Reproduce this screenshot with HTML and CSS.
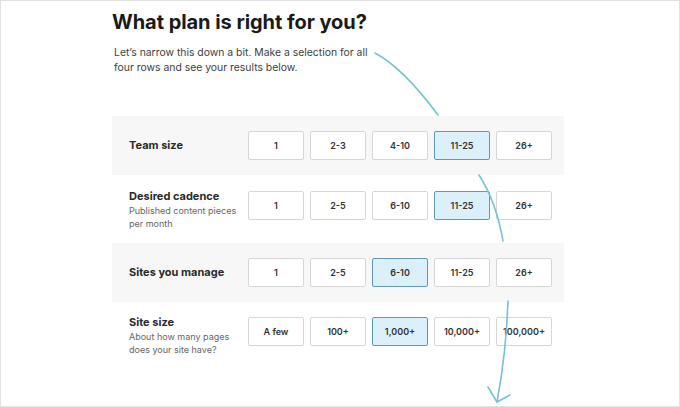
FILE: index.html
```html
<!DOCTYPE html>
<html lang="en">
<head>
<meta charset="utf-8">
<title>What plan is right for you?</title>
<link rel="stylesheet" href="styles.css">
</head>
<body>
<div class="frame">
  <div class="content">
    <h1 class="title">What plan is right for you?</h1>
    <p class="intro">Let’s narrow this down a bit. Make a selection for all four rows and see your results below.</p>

    <div class="rows">
      <div class="row row--shaded">
        <div class="label"><div class="label-title">Team size</div></div>
        <div class="options">
          <button class="opt">1</button>
          <button class="opt">2-3</button>
          <button class="opt">4-10</button>
          <button class="opt opt--on">11-25</button>
          <button class="opt">26+</button>
        </div>
      </div>

      <div class="row row--top">
        <div class="label">
          <div class="label-title">Desired cadence</div>
          <div class="label-sub">Published content pieces per month</div>
        </div>
        <div class="options">
          <button class="opt">1</button>
          <button class="opt">2-5</button>
          <button class="opt">6-10</button>
          <button class="opt opt--on">11-25</button>
          <button class="opt">26+</button>
        </div>
      </div>

      <div class="row row--shaded">
        <div class="label"><div class="label-title">Sites you manage</div></div>
        <div class="options">
          <button class="opt">1</button>
          <button class="opt">2-5</button>
          <button class="opt opt--on">6-10</button>
          <button class="opt">11-25</button>
          <button class="opt">26+</button>
        </div>
      </div>

      <div class="row row--top row--last">
        <div class="label">
          <div class="label-title">Site size</div>
          <div class="label-sub">About how many pages does your site have?</div>
        </div>
        <div class="options">
          <button class="opt">A few</button>
          <button class="opt">100+</button>
          <button class="opt opt--on">1,000+</button>
          <button class="opt">10,000+</button>
          <button class="opt">100,000+</button>
        </div>
      </div>
    </div>
  </div>

  <svg class="arrows" width="680" height="407" viewBox="0 0 680 407" aria-hidden="true">
    <path class="stroke-teal" d="M375 53 C392 62 412 80 438 115"/>
    <path class="stroke-blue" d="M479 175 C490 192 498 212 503 241"/>
    <path class="stroke-blue" d="M508 301 C507 330 503 370 497 402"/>
    <path class="stroke-blue" d="M488 387 L497 402 L510 395"/>
  </svg>
</div>
</body>
</html>
```

FILE: styles.css
```css
* { box-sizing: border-box; }

html, body {
  margin: 0;
  padding: 0;
  background: #ffffff;
}

.frame {
  position: relative;
  width: 680px;
  height: 407px;
  border: 1px solid #e2e2e2;
  overflow: hidden;
  font-family: Inter, "Noto Sans", "Liberation Sans", sans-serif;
  color: #222;
}

.content {
  margin-left: 111px;
  width: 452px;
  padding-top: 8px;
}

.title {
  margin: 0;
  font-size: 20px;
  line-height: 26px;
  font-weight: 700;
  color: #1a1a1a;
  letter-spacing: -0.05px;
}

.intro {
  margin: 10px 0 0 2px;
  width: 262px;
  font-size: 10.4px;
  line-height: 15px;
  color: #3e3e3e;
}

.rows {
  margin-top: 41px;
  display: flex;
  flex-direction: column;
}

.row {
  display: flex;
  align-items: center;
  padding: 15px 12px 15px 17px;
}

.row--shaded {
  background: #f7f7f7;
}

.row--top {
  align-items: flex-start;
  padding-top: 16px;
  padding-bottom: 13px;
}

.row--last {
  padding-top: 15px;
}

.label {
  width: 119px;
  flex: none;
}

.label-title {
  font-size: 11px;
  font-weight: 700;
  color: #2a2a2a;
  line-height: 15px;
}

.row--top .label-title {
  margin-top: -2px;
}

.label-sub {
  margin-top: 1px;
  font-size: 9px;
  line-height: 12.5px;
  color: #666;
  width: 112px;
}

.options {
  display: flex;
  gap: 6px;
}

.opt {
  width: 56px;
  height: 29px;
  margin: 0;
  padding: 0;
  border: 1px solid #d6d6d6;
  border-radius: 2px;
  background: #ffffff;
  font-family: inherit;
  font-size: 9px;
  font-weight: 600;
  color: #333;
}

.opt--on {
  background: #dcf0fb;
  border-color: #5c9ab5;
}

.arrows {
  position: absolute;
  left: -1px;
  top: -1px;
  pointer-events: none;
}

.arrows path {
  fill: none;
  stroke-width: 1.6;
  stroke-linecap: round;
  stroke-linejoin: round;
}

.stroke-teal { stroke: #72c6c4; }
.stroke-blue { stroke: #79bedb; }
```
